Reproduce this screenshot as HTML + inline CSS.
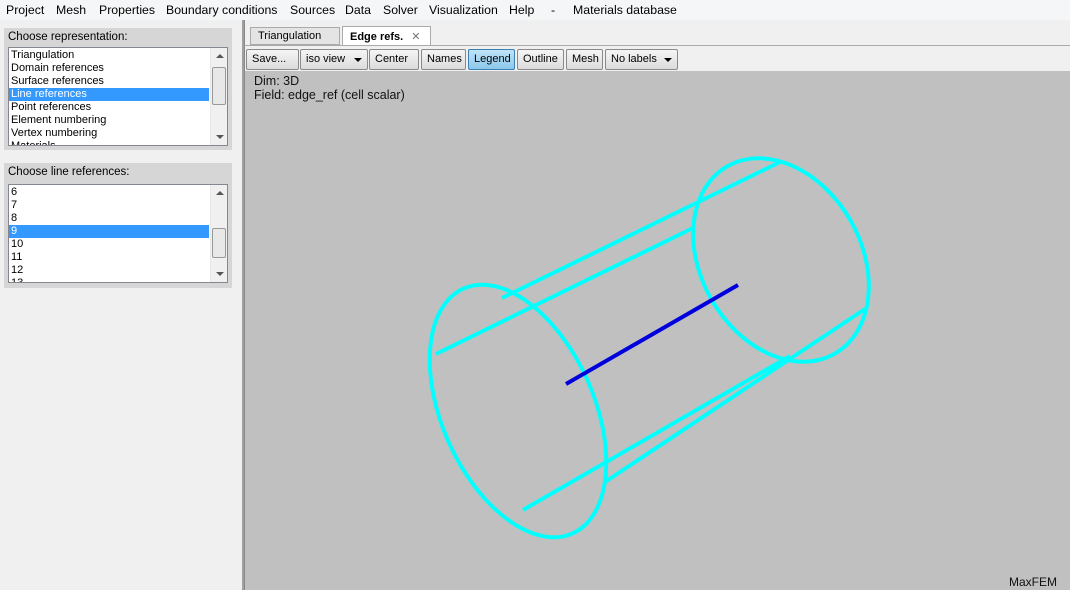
<!DOCTYPE html>
<html><head><style>
*{box-sizing:border-box;margin:0;padding:0}
body{width:1070px;height:590px;overflow:hidden;background:#f0f0f0;font-family:"Liberation Sans",sans-serif;font-size:12px;position:relative}
.menu{position:absolute;left:0;top:0;width:1070px;height:20px;background:#f5f6f7;font-size:12.3px}
.menu span{position:absolute;top:3px}
.grp{position:absolute;left:4px;width:228px;background:#d6d6d6}
.grp .lbl{position:absolute;left:4px;top:3px;font-size:11.5px}
.list{position:absolute;left:4px;width:220px;background:#fff;border:1px solid #828790;font-size:11px;overflow:hidden}
.list .it{height:13px;line-height:13px;padding-left:2px;width:200px}
.sel{background:#3399ff;color:#fff}
.sb{position:absolute;right:0;top:0;width:17px;bottom:0;background:#f0f0f0;border-left:1px solid #e8e8e8}
.thumb{position:absolute;left:1px;width:14px;background:#e8e8e8;border:1px solid #999;border-radius:2px}
.up,.dn{position:absolute;left:5px;border-left:4px solid transparent;border-right:4px solid transparent}
.up{top:6px;border-bottom:4px solid #555}
.dn{bottom:6px;border-top:4px solid #555}
.btn{position:absolute;top:49px;height:21px;border:1px solid #8a8a8a;border-radius:2px;background:linear-gradient(#f5f5f5,#dcdcdc);font-size:11px;line-height:19px;padding-left:5px}
.arr{position:absolute;right:5px;top:8px;border-left:4px solid transparent;border-right:4px solid transparent;border-top:4px solid #000}
</style></head><body>
<div class="menu">
<span style="left:6px">Project</span><span style="left:56px">Mesh</span><span style="left:99px">Properties</span><span style="left:166px">Boundary conditions</span><span style="left:290px">Sources</span><span style="left:345px">Data</span><span style="left:383px">Solver</span><span style="left:429px">Visualization</span><span style="left:509px">Help</span><span style="left:551px">-</span><span style="left:573px">Materials database</span>
</div>
<div style="position:absolute;left:242px;top:20px;width:2px;height:570px;background:#a0a0a0"></div>
<div class="grp" style="top:28px;height:122px"><div class="lbl">Choose representation:</div>
<div class="list" style="top:19px;height:99px">
<div class="it" style="margin-top:1px">Triangulation</div><div class="it">Domain references</div><div class="it">Surface references</div><div class="it sel">Line references</div><div class="it">Point references</div><div class="it">Element numbering</div><div class="it">Vertex numbering</div><div class="it">Materials</div>
<div class="sb"><span class="up"></span><div class="thumb" style="top:19px;height:38px"></div><span class="dn"></span></div></div></div>
<div class="grp" style="top:163px;height:125px"><div class="lbl">Choose line references:</div>
<div class="list" style="top:21px;height:99px">
<div class="it" style="margin-top:1px">6</div><div class="it">7</div><div class="it">8</div><div class="it sel">9</div><div class="it">10</div><div class="it">11</div><div class="it">12</div><div class="it">13</div>
<div class="sb"><span class="up"></span><div class="thumb" style="top:43px;height:30px"></div><span class="dn"></span></div></div></div>
<div style="position:absolute;left:244px;top:20px;width:826px;height:570px;background:#f0f0f0;border-left:1px solid #888"></div>
<div style="position:absolute;left:250px;top:27px;width:90px;height:18px;border:1px solid #aaa;background:#e4e4e4;font-size:11px;padding:2px 7px">Triangulation</div>
<div style="position:absolute;left:342px;top:26px;width:89px;height:20px;border:1px solid #aaa;border-bottom:none;background:#fff;font-size:11px;font-weight:bold;padding:3px 7px">Edge refs. <span style="font-weight:normal;color:#777;margin-left:5px">✕</span></div>
<div style="position:absolute;left:245px;top:45px;width:825px;height:1px;background:#aaa"></div>
<div class="btn" style="left:246px;width:53px">Save...</div>
<div class="btn" style="left:300px;width:68px">iso view<span class="arr"></span></div>
<div class="btn" style="left:369px;width:50px">Center</div>
<div class="btn" style="left:421px;width:45px">Names</div>
<div class="btn" style="left:468px;width:47px;background:linear-gradient(#bfe3f7,#8cc8ec);border-color:#3c7fb1">Legend</div>
<div class="btn" style="left:517px;width:47px">Outline</div>
<div class="btn" style="left:566px;width:37px">Mesh</div>
<div class="btn" style="left:605px;width:73px">No labels<span class="arr"></span></div>
<div style="position:absolute;left:245px;top:71px;width:825px;height:519px;background:#c0c0c0"></div>
<div style="position:absolute;left:254px;top:74px;font-size:12.5px;line-height:14px;color:#111">Dim: 3D<br>Field: edge_ref (cell scalar)</div>
<div style="position:absolute;left:1009px;top:575px;font-size:12px;color:#111">MaxFEM</div>
<svg style="position:absolute;left:0;top:0" width="1070" height="590">
<g fill="none" stroke="#00ffff" stroke-width="4">
<ellipse cx="518" cy="411" rx="134" ry="76" transform="rotate(66 518 411)"/>
<ellipse cx="781" cy="260" rx="108" ry="80" transform="rotate(60 781 260)"/>
<line x1="502" y1="298" x2="780" y2="162"/>
<line x1="436" y1="354" x2="693" y2="228"/>
<line x1="605" y1="482" x2="865" y2="309"/>
<line x1="523" y1="510" x2="790" y2="356"/>
</g>
<line x1="566" y1="384" x2="738" y2="285" stroke="#0000dd" stroke-width="4"/>
</svg>
</body></html>
